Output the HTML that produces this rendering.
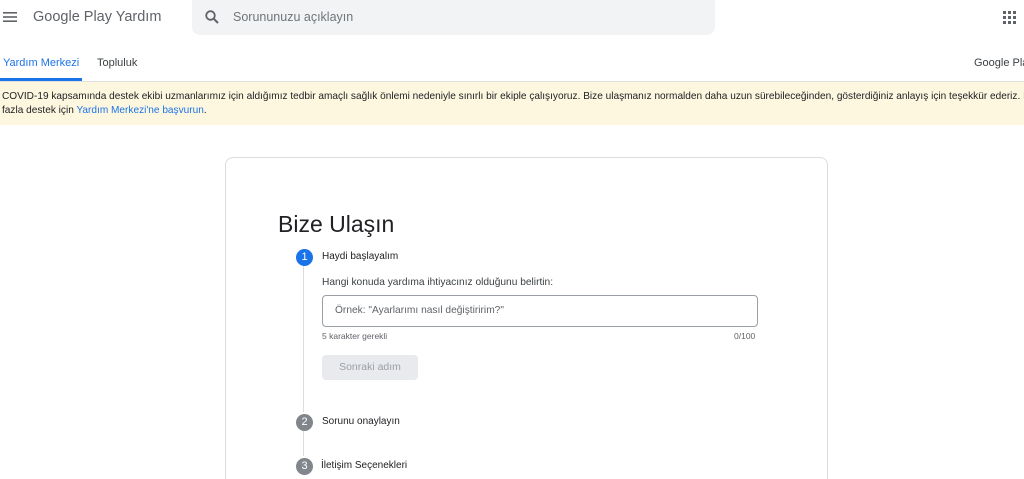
<!DOCTYPE html>
<html style="width:1024px;height:479px;overflow:hidden"><head><meta charset="utf-8"><style>
*{margin:0;padding:0;box-sizing:border-box}
body{width:1024px;height:479px;overflow:hidden;background:#fff;font-family:"Liberation Sans",Arial,sans-serif;position:relative;color:#202124}
.a{position:absolute;white-space:nowrap}
</style></head><body>
<svg class="a" style="left:3px;top:11px" width="14" height="12" viewBox="0 0 14 12"><rect y="1" width="14" height="1.6" fill="#5f6368"/><rect y="5.2" width="14" height="1.6" fill="#5f6368"/><rect y="9.4" width="14" height="1.6" fill="#5f6368"/></svg>
<div class="a" style="left:33px;top:9px;font-size:14.5px;color:#5f6368">Google Play Yardım</div>
<div class="a" style="left:192px;top:0;width:523px;height:35px;background:#f1f3f4;border-radius:0 0 8px 8px"></div>
<svg class="a" style="left:205px;top:10px" width="14" height="14" viewBox="0 0 14 14"><circle cx="5.5" cy="5.5" r="4.3" stroke="#5f6368" stroke-width="1.8" fill="none"/><line x1="8.5" y1="8.5" x2="13" y2="13" stroke="#5f6368" stroke-width="2"/></svg>
<div class="a" style="left:233px;top:10px;font-size:12.5px;color:#70757a">Sorununuzu açıklayın</div>
<svg class="a" style="left:1003px;top:11px" width="13" height="13" viewBox="0 0 13 13" fill="#5f6368"><rect x="0" y="0" width="3" height="3"/><rect x="5" y="0" width="3" height="3"/><rect x="10" y="0" width="3" height="3"/><rect x="0" y="5" width="3" height="3"/><rect x="5" y="5" width="3" height="3"/><rect x="10" y="5" width="3" height="3"/><rect x="0" y="10" width="3" height="3"/><rect x="5" y="10" width="3" height="3"/><rect x="10" y="10" width="3" height="3"/></svg>
<div class="a" style="left:3px;top:57px;font-size:11px;color:#1a73e8">Yardım Merkezi</div>
<div class="a" style="left:97px;top:57px;font-size:11px;color:#3c4043">Topluluk</div>
<div class="a" style="left:974px;top:57px;font-size:11px;color:#3c4043">Google Play</div>
<div class="a" style="left:0;top:78px;width:82px;height:3px;background:#1a73e8"></div>
<div class="a" style="left:0;top:81px;width:1024px;height:1px;background:#e0e0e0"></div>
<div class="a" style="left:0;top:82px;width:1024px;height:43px;background:#fef7e0"></div>
<div class="a" style="left:2px;top:90px;font-size:10.1px;line-height:14px;color:#202124">COVID-19 kapsamında destek ekibi uzmanlarımız için aldığımız tedbir amaçlı sağlık önlemi nedeniyle sınırlı bir ekiple çalışıyoruz. Bize ulaşmanız normalden daha uzun sürebileceğinden, gösterdiğiniz anlayış için teşekkür ederiz. Daha<br>fazla destek için <span style="color:#1a73e8">Yardım Merkezi'ne başvurun</span>.</div>
<div class="a" style="left:225px;top:157px;width:603px;height:322px;border:1px solid #dadce0;border-bottom:none;border-radius:8px 8px 0 0"></div>
<div class="a" style="left:278px;top:211px;font-size:23px;color:#202124">Bize Ulaşın</div>
<div class="a" style="left:303px;top:265px;width:1px;height:147px;background:#dadce0"></div>
<div class="a" style="left:303px;top:431px;width:1px;height:25px;background:#dadce0"></div>
<div class="a" style="left:296px;top:249px;width:17px;height:17px;border-radius:50%;background:#1a73e8;color:#fff;font-size:11px;text-align:center;line-height:17px">1</div>
<div class="a" style="left:296px;top:414px;width:17px;height:17px;border-radius:50%;background:#80868b;color:#fff;font-size:11px;text-align:center;line-height:17px">2</div>
<div class="a" style="left:296px;top:458px;width:17px;height:17px;border-radius:50%;background:#80868b;color:#fff;font-size:11px;text-align:center;line-height:17px">3</div>
<div class="a" style="left:322px;top:251px;font-size:10px">Haydi başlayalım</div>
<div class="a" style="left:322px;top:277px;font-size:10.2px;color:#3c4043">Hangi konuda yardıma ihtiyacınız olduğunu belirtin:</div>
<div class="a" style="left:322px;top:295px;width:436px;height:32px;border:1px solid #9aa0a6;border-radius:4px"></div>
<div class="a" style="left:335px;top:305px;font-size:10.2px;color:#5f6368">Örnek: "Ayarlarımı nasıl değiştiririm?"</div>
<div class="a" style="left:322px;top:331px;font-size:8.5px;color:#5f6368">5 karakter gerekli</div>
<div class="a" style="left:734px;top:331px;font-size:8.5px;color:#5f6368">0/100</div>
<div class="a" style="left:322px;top:355px;width:96px;height:25px;background:#e8eaed;border-radius:4px;color:#9aa0a6;font-size:10.5px;text-align:center;line-height:25px">Sonraki adım</div>
<div class="a" style="left:322px;top:416px;font-size:10px">Sorunu onaylayın</div>
<div class="a" style="left:321px;top:460px;font-size:10px">İletişim Seçenekleri</div>
</body></html>
